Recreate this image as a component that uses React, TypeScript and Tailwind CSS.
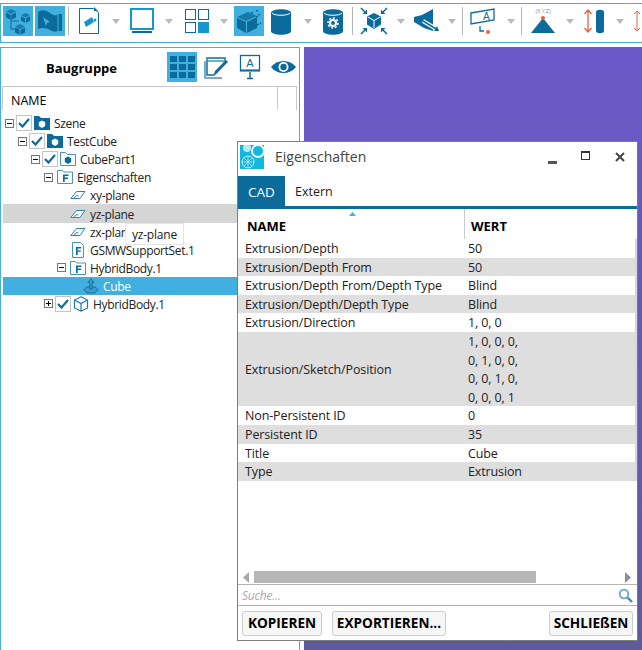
import type { ReactNode } from "react";

const BLUE = "#0b6c9c";
const RED = "#e8603c";

function Drop({ ml }: { ml: string }) {
  return (
    <svg width="8" height="5" viewBox="0 0 8 5" className={`shrink-0 ${ml}`}>
      <path d="M0 0h8L4 5z" fill="#b9b9b9" />
    </svg>
  );
}

function Sep({ ml }: { ml: string }) {
  return <div className={`h-[28px] w-px shrink-0 bg-[#b4b4b4] ${ml}`} />;
}

function Ico({ w, ml, active, children }: { w: number; ml: string; active?: boolean; children: ReactNode }) {
  return (
    <div className={`flex h-[30px] shrink-0 items-center justify-center ${ml} ${active ? "bg-[#41b0e0]" : ""}`} style={{ width: w }}>
      <svg width="30" height="30" viewBox="0 0 30 30" className="shrink-0">
        {children}
      </svg>
    </div>
  );
}

function Cube({ x, y, s, fill = BLUE }: { x: number; y: number; s: number; fill?: string }) {
  return (
    <g transform={`translate(${x} ${y}) scale(${s})`}>
      <path d="M5 0l5 2.500-5 2.500-5-2.500z" fill={fill} opacity="0.75" />
      <path d="M0 3.500l4.500 2.300v5L0 8.500z" fill={fill} />
      <path d="M10 3.500L5.500 5.800v5L10 8.500z" fill={fill} />
    </g>
  );
}

function Toolbar() {
  return (
    <div className="flex h-[40px] items-center border-y border-l border-[#41b0e0] pb-[4px] pl-[2px]">
      <Ico w={30} ml="ml-0" active>
        <path d="M8 9v14h8M8 15h8" stroke={BLUE} strokeWidth="1" fill="none" />
        <Cube x={3} y={3} s={1} />
        <Cube x={18} y={7} s={0.9} />
        <Cube x={12} y={18} s={1} />
      </Ico>
      <Ico w={30} ml="ml-[2px]" active>
        <path d="M3 6c4-3 8-2 12 1s7 3 8 1l4 0v17h-4c-2 1-5 1-8-1s-8-3-12-1z" fill={BLUE} />
        <path d="M8 11l7 5-3 1-1 3z" fill="#41b0e0" />
        <path d="M23 8v17" stroke="#41b0e0" strokeWidth="1" />
      </Ico>
      <Sep ml="ml-[3px]" />
      <Ico w={20} ml="ml-[10px]">
        <path d="M5.500 2.500h14l5 4v21h-19z" fill="#fff" stroke={BLUE} />
        <path d="M20 1l4 4h-4z" fill={BLUE} />
        <path d="M10 16l8-5 2 5-8 5z" fill="#1596cf" />
        <circle cx="21" cy="14" r="1.500" fill="#1596cf" />
      </Ico>
      <Drop ml="ml-[13px]" />
      <Ico w={24} ml="ml-[10px]">
        <rect x="4" y="3" width="22" height="20" fill="#fff" stroke="#1596cf" strokeWidth="2" />
        <rect x="5" y="25" width="20" height="2" fill={BLUE} />
      </Ico>
      <Drop ml="ml-[11px]" />
      <Ico w={24} ml="ml-[12px]">
        <rect x="3.500" y="3.500" width="10" height="10" fill="none" stroke={BLUE} />
        <rect x="16.500" y="3.500" width="10" height="10" fill="none" stroke={BLUE} />
        <rect x="3.500" y="16.500" width="10" height="10" fill="none" stroke={BLUE} />
        <rect x="16" y="16" width="11" height="11" fill="#1596cf" />
      </Ico>
      <Drop ml="ml-[11px]" />
      <Ico w={30} ml="ml-[6px]" active>
        <path d="M3 11l11-5 9 4-11 5z" fill={BLUE} opacity="0.8" />
        <path d="M3 12l9 4v11l-9-5z" fill={BLUE} />
        <path d="M13 16l10-5v11l-10 5z" fill={BLUE} />
        <path d="M17 7l3-1M22 5l3-1M22 11l3-1M24 9l3-1M23 19l4-2" stroke={BLUE} strokeWidth="1.500" strokeDasharray="2 1" />
      </Ico>
      <Ico w={20} ml="ml-[7px]">
        <path d="M5 7c0-5 20-5 20 0v18c0 5-20 5-20 0z" fill={BLUE} />
        <path d="M6 7c2 3 16 3 18 0" stroke="#fff" fill="none" />
      </Ico>
      <Drop ml="ml-[13px]" />
      <Ico w={20} ml="ml-[11px]">
        <path d="M5 7c0-5 20-5 20 0v18c0 5-20 5-20 0z" fill={BLUE} />
        <path d="M6 7c2 3 16 3 18 0" stroke="#fff" fill="none" />
        <circle cx="15" cy="17" r="3" fill="none" stroke="#fff" strokeWidth="2" />
        <circle cx="15" cy="17" r="5" fill="none" stroke="#fff" strokeWidth="1.500" strokeDasharray="2 1.800" />
      </Ico>
      <Sep ml="ml-[9px]" />
      <Ico w={26} ml="ml-[8px]">
        <path d="M15 7l7 3.500v8L15 23l-7-4.500v-8z" fill={BLUE} />
        <path d="M8.500 10.800L15 14.500l6.500-3.700M15 14.500V22" stroke="#fff" fill="none" />
        <path d="M2 2l5 5M28 2l-5 5M2 28l5-5M28 28l-5-5" stroke={BLUE} strokeWidth="1.500" />
        <path d="M8 8H3.500L8 3.500zM22 8h4.500L22 3.500zM8 22H3.500L8 26.500zM22 22h4.500L22 26.500z" fill={BLUE} />
      </Ico>
      <Drop ml="ml-[10px]" />
      <Ico w={25} ml="ml-[8px]">
        <path d="M3 11l8-2 11-6v22l-9-3-10-6z" fill={BLUE} />
        <path d="M12 15l15 9" stroke="#fff" strokeWidth="4" />
        <path d="M12 15l15 9" stroke={BLUE} strokeWidth="1.500" />
        <path d="M26 20l2 5-5 0" fill={BLUE} />
      </Ico>
      <Drop ml="ml-[10px]" />
      <Sep ml="ml-[6px]" />
      <Ico w={26} ml="ml-[8px]">
        <path d="M2 7l23-4v11L2 18z" fill="#fff" stroke={BLUE} strokeWidth="1.300" />
        <text x="14" y="14" fontSize="10" fill={BLUE} fontFamily="'Liberation Sans', sans-serif">A</text>
        <path d="M11 20v5h4" stroke={BLUE} fill="none" strokeWidth="1.300" />
        <circle cx="19" cy="26" r="2" fill={RED} />
      </Ico>
      <Drop ml="ml-[10px]" />
      <Sep ml="ml-[6px]" />
      <Ico w={26} ml="ml-[8px]">
        <text x="15" y="7" fontSize="5" fill="#7f8f9a" textAnchor="middle" fontFamily="'Liberation Sans', sans-serif">(X,Y,Z)</text>
        <path d="M15 12L27 27H3z" fill={BLUE} />
        <circle cx="15" cy="12" r="2" fill={RED} />
      </Ico>
      <Drop ml="ml-[10px]" />
      <Ico w={22} ml="ml-[10px]">
        <path d="M8 4v22M4.500 8L8 4l3.500 4M4.500 22L8 26l3.500-4" stroke={RED} fill="none" strokeWidth="1.300" />
        <path d="M16 6c0-3 8-3 8 0v19c0 3-8 3-8 0z" fill={BLUE} />
      </Ico>
      <Drop ml="ml-[10px]" />
      <Ico w={22} ml="ml-[9px]">
        <path d="M8 5v20M5 8l3-3 3 3M5 22l3 3 3-3" stroke={RED} fill="none" />
        <path d="M16 6c4-3 9 0 6 4-2 3-6 3-6 8s5 6 8 4" fill="none" stroke={BLUE} strokeWidth="1.300" />
        <circle cx="22" cy="16" r="2" fill={RED} />
      </Ico>
    </div>
  );
}

function Expander({ open, gap }: { open: boolean; gap: string }) {
  return (
    <div className={`relative h-[9px] w-[9px] shrink-0 border border-[#777] bg-white ${gap}`}>
      <div className="absolute left-[1px] top-[3px] h-px w-[5px] bg-black" />
      {!open && <div className="absolute left-[3px] top-[1px] h-[5px] w-px bg-black" />}
    </div>
  );
}

function Check() {
  return (
    <div className="mr-[2px] flex h-[16px] w-[16px] shrink-0 items-center justify-center border border-[#c4c4c4] bg-white">
      <svg width="12" height="10" viewBox="0 0 12 10">
        <path d="M1 5l3.500 3.500L11 1" stroke={BLUE} strokeWidth="2.200" fill="none" />
      </svg>
    </div>
  );
}

function TreeIcon({ kind }: { kind: string }) {
  if (kind === "scene")
    return (
      <svg width="16" height="16" viewBox="0 0 16 16" className="shrink-0">
        <path d="M0 1h5l2 2h9v12H0z" fill={BLUE} />
        <path d="M8 5.500l3.200 1.700v3.800L8 13l-3.200-2V7.200z" fill="#fff" />
      </svg>
    );
  if (kind === "part")
    return (
      <svg width="16" height="16" viewBox="0 0 16 16" className="shrink-0">
        <path d="M.5 1.500h5l2 2h8v11H.5z" fill="#fff" stroke="#4a93b8" />
        <path d="M8 5.500l3.200 1.700v3.800L8 13l-3.200-2V7.200z" fill={BLUE} />
      </svg>
    );
  if (kind === "folder")
    return (
      <svg width="16" height="16" viewBox="0 0 16 16" className="shrink-0">
        <path d="M.5 1.500h5l1.500 1.500h8.500v11.500H.5z" fill="#fff" stroke="#4a93b8" />
        <path d="M6 5.500h5.500v1.400H7.700v1.700h3.300V10H7.700v3H6z" fill={BLUE} />
      </svg>
    );
  if (kind === "plane")
    return (
      <svg width="16" height="16" viewBox="0 0 16 16" className="shrink-0">
        <path d="M.8 11.500L6.500 4.500h8.500l-5 7z" fill="#fff" stroke="#2f83ad" />
        <path d="M4.500 11.500c0-2.500 2-3.500 4-2.500" fill="none" stroke="#2f83ad" />
      </svg>
    );
  if (kind === "file")
    return (
      <svg width="16" height="16" viewBox="0 0 16 16" className="shrink-0">
        <path d="M2.500 .5h8l3 3v12h-11z" fill="#fff" stroke="#4a93b8" />
        <path d="M6 5h5.300v1.400H7.700v2h3.100v1.400H7.700V13H6z" fill={BLUE} />
      </svg>
    );
  if (kind === "extrude")
    return (
      <svg width="16" height="16" viewBox="0 0 16 16" className="shrink-0">
        <path d="M.8 11.500L4 9h8l3.200 2.500L12 15H4z" fill="#3a9dcc" stroke="#1a6f9f" />
        <path d="M8 .8L4.800 4.500h2V11h2.400V4.500h2z" fill="#3a9dcc" stroke="#1a6f9f" />
      </svg>
    );
  return (
    <svg width="16" height="16" viewBox="0 0 16 16" className="shrink-0">
      <path d="M8 .8l6.500 3.200v8L8 15.200 1.500 12V4zM1.500 4L8 7.500 14.500 4M8 7.500v7.700" fill="#fff" stroke="#1a78a8" strokeWidth="1.200" />
    </svg>
  );
}

const tree = [
  { pad: "pl-[2px]", open: true, check: true, icon: "scene", label: "Szene" },
  { pad: "pl-[15px]", open: true, check: true, icon: "scene", label: "TestCube" },
  { pad: "pl-[28px]", open: true, check: true, icon: "part", label: "CubePart1" },
  { pad: "pl-[41px]", open: true, icon: "folder", label: "Eigenschaften" },
  { pad: "pl-[67px]", icon: "plane", label: "xy-plane" },
  { pad: "pl-[67px]", icon: "plane", label: "yz-plane", hover: true },
  { pad: "pl-[67px]", icon: "plane", label: "zx-plane" },
  { pad: "pl-[67px]", icon: "file", label: "GSMWSupportSet.1" },
  { pad: "pl-[54px]", open: true, icon: "folder", label: "HybridBody.1" },
  { pad: "pl-[80px]", icon: "extrude", label: "Cube", selected: true },
  { pad: "pl-[41px]", open: false, check: true, icon: "cube", label: "HybridBody.1" },
];

function LeftPanel() {
  return (
    <div className="flex h-full w-[300px] shrink-0 flex-col border-x border-t border-[#41b0e0]">
      <div className="flex h-[38px] shrink-0 items-center">
        <div className="w-[166px] pr-[5px] pt-[4px] text-center text-[13px] font-bold text-black">Baugruppe</div>
        <div className="flex h-[30px] w-[30px] items-center justify-center bg-[#41b0e0]">
          <div className="grid grid-cols-3 gap-[2px]">
            {Array.from({ length: 9 }).map((_, i) => (
              <div key={i} className="h-[6px] w-[7px] bg-[#0b6c9c]" />
            ))}
          </div>
        </div>
        <svg width="26" height="26" viewBox="0 0 26 26" className="ml-[6px] shrink-0">
          <path d="M4 4h18v4L14 18l-3 3H4z" fill="#fff" stroke={BLUE} strokeWidth="1.500" />
          <path d="M4 4h18v3H4zM2 7v17h17" fill="none" stroke="#4a93b8" strokeWidth="1.500" />
          <path d="M12 17l11-11 2 2-11 11-3 1z" fill={BLUE} />
        </svg>
        <svg width="22" height="26" viewBox="0 0 22 26" className="ml-[10px] shrink-0">
          <rect x="1.500" y="1.500" width="19" height="15" fill="#fff" stroke={BLUE} strokeWidth="1.300" />
          <rect x="1" y="15.500" width="20" height="2" fill={BLUE} />
          <text x="11" y="13" fontSize="11" textAnchor="middle" fill={BLUE} fontFamily="'Liberation Sans', sans-serif">A</text>
          <path d="M11 18v6M8 24.500h6" stroke={BLUE} strokeWidth="1.500" />
        </svg>
        <svg width="25" height="16" viewBox="0 0 25 16" className="ml-[10px] shrink-0">
          <path d="M0 8c6-8 19-8 25 0-6 8-19 8-25 0z" fill={BLUE} />
          <circle cx="12.500" cy="8" r="5" fill="#fff" />
          <circle cx="12.500" cy="8" r="3.200" fill={BLUE} />
        </svg>
      </div>
      <div className="ml-[1px] mr-[2px] flex h-[24px] shrink-0 border-l border-r border-t border-[#c8c8c8]">
        <div className="flex-1 pl-[8px] pt-[5px] text-[12.5px] leading-[18px] text-black">NAME</div>
        <div className="w-[19px] border-l border-[#c8c8c8]" />
      </div>
      <div className="pl-[2px] pt-[4px]">
        {tree.map((r) => (
          <div
            key={r.label + r.pad}
            className={`flex h-[18.1px] items-center ${r.pad} ${r.hover ? "bg-[#d5d5d5]" : ""} ${r.selected ? "bg-[#41b0e0] text-white" : "text-[#222]"}`}
          >
            {r.open !== undefined && <Expander open={r.open} gap={r.check ? "mr-[2px]" : "mr-[4px]"} />}
            {r.check && <Check />}
            <TreeIcon kind={r.icon} />
            <span className="ml-[4px] whitespace-nowrap pt-[2px] text-[12px] leading-[18px] tracking-[-0.33px]">{r.label}</span>
          </div>
        ))}
      </div>
    </div>
  );
}

const rows: [string, string[]][] = [
  ["Extrusion/Depth", ["50"]],
  ["Extrusion/Depth From", ["50"]],
  ["Extrusion/Depth From/Depth Type", ["Blind"]],
  ["Extrusion/Depth/Depth Type", ["Blind"]],
  ["Extrusion/Direction", ["1, 0, 0"]],
  ["Extrusion/Sketch/Position", ["1, 0, 0, 0,", "0, 1, 0, 0,", "0, 0, 1, 0,", "0, 0, 0, 1"]],
  ["Non-Persistent ID", ["0"]],
  ["Persistent ID", ["35"]],
  ["Title", ["Cube"]],
  ["Type", ["Extrusion"]],
];

function Btn({ children, className }: { children: ReactNode; className: string }) {
  return (
    <div className={`flex h-[25px] items-center justify-center rounded-[3px] border border-[#cdcdcd] bg-[#f6f6f6] pt-[1px] text-[13.6px] font-bold text-black ${className}`}>
      {children}
    </div>
  );
}

function Dialog() {
  return (
    <div className="absolute left-[237px] top-[141px] flex h-[500px] w-[401px] flex-col border border-[#7d7d7d] bg-white text-[12.5px] text-[#222]">
      <div className="flex h-[34px] shrink-0 items-center">
        <svg width="24" height="24" viewBox="0 0 24 24" className="ml-[2px] mt-[-5px] shrink-0">
          <rect width="24" height="24" fill="#12b8e0" />
          <circle cx="18" cy="6" r="7" fill="#fff" opacity="0.9" />
          <circle cx="18" cy="6" r="5" fill="#12b8e0" />
          <circle cx="7" cy="3" r="4" fill="#fff" opacity="0.7" />
          <circle cx="8" cy="17" r="6" fill="none" stroke="#fff" strokeWidth="0.700" />
          <path d="M2 17h12M8 11v12M4 13l8 8M12 13l-8 8" stroke="#fff" strokeWidth="0.500" />
        </svg>
        <span className="ml-[11px] mt-[-6px] text-[14px] text-[#444]">Eigenschaften</span>
        <div className="ml-auto flex items-center">
          <div className="mt-[6px] h-[3px] w-[9px] bg-[#555]" />
          <div className="ml-[24px] mt-[-7px] h-[9px] w-[9px] border border-t-2 border-[#333]" />
          <svg width="10" height="10" viewBox="0 0 10 10" className="ml-[25px] mr-[12px] mt-[-4px]">
            <path d="M1 1l8 8M9 1L1 9" stroke="#444" strokeWidth="2" />
          </svg>
        </div>
      </div>
      <div className="flex h-[30px] shrink-0 items-center">
        <div className="flex h-full w-[47px] items-center justify-center bg-[#0b6c9c] pt-[3px] text-[13.5px] text-white">CAD</div>
        <div className="ml-[10px] pt-[3px] text-[12.5px]">Extern</div>
      </div>
      <div className="h-[3px] shrink-0 bg-[#0b6c9c]" />
      <div className="relative flex h-[30px] shrink-0">
        <div className="w-[227px] border-r border-[#c8c8c8] pl-[9px] pt-[8px] text-[13px] font-bold leading-[18px] text-black">NAME</div>
        <div className="pl-[6px] pt-[8px] text-[13px] font-bold leading-[18px] text-black">WERT</div>
        <svg width="7" height="4" viewBox="0 0 7 4" className="absolute left-[111px] top-[3px]">
          <path d="M0 4l3.500-4L7 4z" fill="#41b0e0" />
        </svg>
      </div>
      <div className="border-r-2 border-[#d8d8d8]">
        {rows.map(([name, values], i) => (
          <div key={name} className={`flex items-center ${i % 2 === 1 ? "bg-[#dedede]" : "bg-white"}`}>
            <div className="h-[18.6px] w-[230px] shrink-0 whitespace-nowrap pl-[7px] text-[12.5px] leading-[20px] tracking-[-0.13px]">{name}</div>
            <div>
              {values.map((v) => (
                <div key={v} className="h-[18.6px] text-[12.5px] leading-[20px] tracking-[-0.13px]">{v}</div>
              ))}
            </div>
          </div>
        ))}
      </div>
      <div className="flex-1" />
      <div className="flex h-[14px] shrink-0 items-center pl-[5px]">
        <svg width="6" height="11" viewBox="0 0 6 11" className="shrink-0">
          <path d="M6 0v11L0 5.500z" fill="#a8a8a8" />
        </svg>
        <div className="ml-[5px] h-[12px] w-[282px] bg-[#b6b6b6]" />
        <svg width="6" height="11" viewBox="0 0 6 11" className="ml-auto mr-[6px] shrink-0">
          <path d="M0 0v11l6-5.500z" fill="#8f8f8f" />
        </svg>
      </div>
      <div className="flex h-[22px] shrink-0 items-center justify-between border-y border-[#b4b4b4] pl-[4px] pr-[4px]">
        <span className="pt-[1px] text-[12px] italic tracking-[-0.2px] text-[#aaa]">Suche...</span>
        <svg width="15" height="15" viewBox="0 0 15 15">
          <circle cx="6" cy="6" r="4.300" fill="none" stroke="#6aa5c4" strokeWidth="1.800" />
          <path d="M9.500 9.500l4.500 4.500" stroke="#3c8db6" strokeWidth="2.400" />
        </svg>
      </div>
      <div className="flex h-[34px] shrink-0 items-center px-[4px]">
        <Btn className="w-[80px]">KOPIEREN</Btn>
        <Btn className="ml-[10px] w-[114px]">EXPORTIEREN...</Btn>
        <Btn className="ml-auto w-[84px]">SCHLIEßEN</Btn>
      </div>
    </div>
  );
}

export default function App() {
  return (
    <div className="relative h-[650px] w-[642px] overflow-hidden bg-white font-['Open_Sans',sans-serif]">
      <div className="pt-[3px]">
        <Toolbar />
      </div>
      <div className="mt-[4px] flex h-[603px]">
        <LeftPanel />
        <div className="ml-[4px] flex-1 bg-gradient-to-b from-[#6c59c9] to-[#5f5a9c]" />
      </div>
      <div className="absolute left-[125px] top-[223px] flex h-[22px] w-[59px] items-center justify-center border border-[#e4e4e4] bg-white pt-[2px] text-[12px] tracking-[-0.2px] text-[#222]">
        yz-plane
      </div>
      <Dialog />
    </div>
  );
}
